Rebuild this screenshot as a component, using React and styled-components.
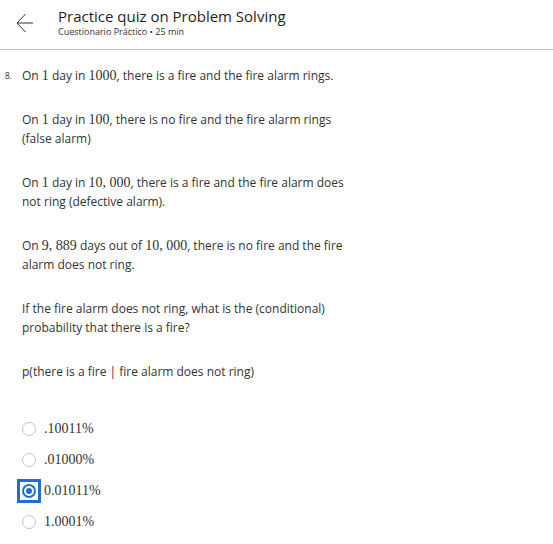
import styled, { createGlobalStyle } from "styled-components";

const GlobalStyle = createGlobalStyle`
  body {
    margin: 0;
    background: #fff;
    font-family: "Open Sans", "Noto Sans", sans-serif;
    color: #333;
  }
`;

const Header = styled.header`
  display: flex;
  align-items: flex-start;
  height: 49px;
  border-bottom: 1px solid #c2c2c2;
`;

const BackButton = styled.button`
  width: 58px;
  height: 46px;
  padding: 0 0 0 16px;
  border: 0;
  background: none;
  display: flex;
  align-items: center;
  cursor: pointer;
`;

const TitleBlock = styled.div`
  display: flex;
  flex-direction: column;
  padding-top: 6px;
`;

const Title = styled.h1`
  margin: 0;
  font-size: 15px;
  font-weight: 400;
  line-height: 20px;
  color: #1f1f1f;
`;

const Subtitle = styled.div`
  font-size: 9px;
  line-height: 12px;
  color: #333;
`;

const Question = styled.section`
  display: flex;
  padding: 16px 0 0 5px;
`;

const Number = styled.div`
  width: 17px;
  font-size: 8.5px;
  line-height: 19px;
  color: #333;
`;

const Body = styled.div`
  width: 335px;
`;

const Para = styled.p`
  margin: 0 0 25px;
  font-size: 12px;
  line-height: 19px;
  color: #333;
`;

const M = styled.span`
  font-family: "Liberation Serif", "Times New Roman", serif;
  font-size: 14px;
  line-height: 1;
`;

const Options = styled.div`
  display: flex;
  flex-direction: column;
  margin-top: 32px;
`;

const Option = styled.label`
  display: flex;
  align-items: center;
  height: 31px;
  margin-left: -5px;
`;

const RadioBox = styled.span`
  width: 24px;
  height: 24px;
  box-sizing: border-box;
  display: flex;
  align-items: center;
  justify-content: center;
  border: 3px solid ${(p) => (p.$focus ? "#1f6fd0" : "transparent")};
  margin-right: 3px;
`;

const Radio = styled.span`
  width: 14px;
  height: 14px;
  box-sizing: border-box;
  border-radius: 50%;
  border: ${(p) => (p.$checked ? "2px solid #1f6fd0" : "1.5px solid #c4c4c4")};
  display: flex;
  align-items: center;
  justify-content: center;

  &::after {
    content: "";
    display: ${(p) => (p.$checked ? "block" : "none")};
    width: 6px;
    height: 6px;
    border-radius: 50%;
    background: #1f6fd0;
  }
`;

const OptionText = styled.span`
  font-family: "Liberation Serif", "Times New Roman", serif;
  font-size: 14px;
  color: #333;
`;

const options = [".10011%", ".01000%", "0.01011%", "1.0001%"];
const selected = 2;

export default function App() {
  return (
    <>
      <GlobalStyle />
      <Header>
        <BackButton aria-label="Back">
          <svg width="18" height="20" viewBox="0 0 18 20" fill="none">
            <path d="M17 10H1.5M9.5 1L1 10l8.5 9" stroke="#333" strokeWidth="1" />
          </svg>
        </BackButton>
        <TitleBlock>
          <Title>Practice quiz on Problem Solving</Title>
          <Subtitle>Cuestionario Práctico • 25 min</Subtitle>
        </TitleBlock>
      </Header>

      <Question>
        <Number>8.</Number>
        <Body>
          <Para>
            On <M>1</M> day in <M>1000</M>, there is a fire and the fire alarm rings.
          </Para>
          <Para>
            On <M>1</M> day in <M>100</M>, there is no fire and the fire alarm rings (false alarm)
          </Para>
          <Para>
            On <M>1</M> day in <M>10, 000</M>, there is a fire and the fire alarm does not ring
            (defective alarm).
          </Para>
          <Para>
            On <M>9, 889</M> days out of <M>10, 000</M>, there is no fire and the fire alarm does
            not ring.
          </Para>
          <Para>
            If the fire alarm does not ring, what is the (conditional) probability that there is a
            fire?
          </Para>
          <Para>p(there is a fire | fire alarm does not ring)</Para>

          <Options>
            {options.map((o, i) => (
              <Option key={o}>
                <RadioBox $focus={i === selected}>
                  <Radio $checked={i === selected} />
                </RadioBox>
                <OptionText>{o}</OptionText>
              </Option>
            ))}
          </Options>
        </Body>
      </Question>
    </>
  );
}
